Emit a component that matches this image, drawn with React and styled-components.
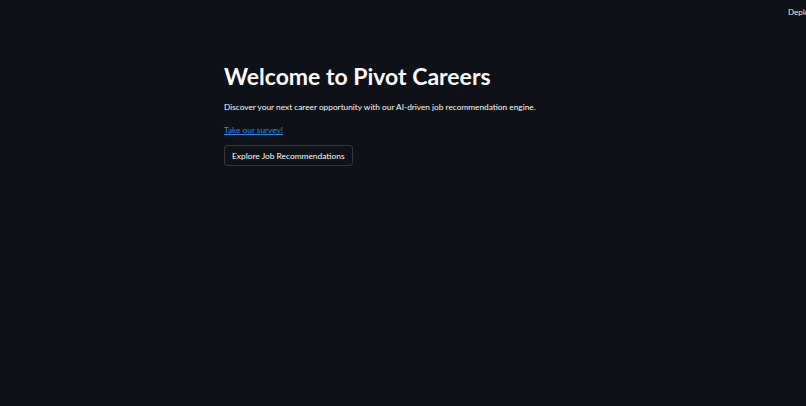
import styled, { createGlobalStyle } from "styled-components";

const Global = createGlobalStyle`
  html, body {
    margin: 0;
    padding: 0;
    background: #0e1117;
    height: 100%;
  }
  #root {
    min-height: 100vh;
  }
  * { box-sizing: border-box; }
`;

const Page = styled.div`
  min-height: 100vh;
  background: #0e1117;
  color: #fafafa;
  font-family: Lato, "Noto Sans", sans-serif;
  overflow: hidden;
`;

const Header = styled.header`
  height: 24px;
  display: flex;
  justify-content: flex-end;
  align-items: center;
  margin-right: -18px;
`;

const DeployText = styled.span`
  font-size: 8px;
  color: #e6e6e6;
  width: 36px;
  white-space: nowrap;
`;

const Main = styled.main`
  width: 358px;
  margin: 0 auto;
  padding-top: 36px;
  display: flex;
  flex-direction: column;
  align-items: flex-start;
`;

const Title = styled.h1`
  margin: 0;
  font-size: 23px;
  font-weight: 700;
  line-height: 32px;
  color: #fafafa;
`;

const Lead = styled.p`
  margin: 8px 0 0;
  font-size: 8.3px;
  line-height: 14px;
  color: #fafafa;
`;

const Link = styled.a`
  margin-top: 9px;
  font-size: 8.3px;
  line-height: 14px;
  color: #2b8ae8;
  text-decoration: underline;
`;

const Button = styled.button`
  margin-top: 8px;
  height: 21px;
  padding: 0 7px;
  background: #0e1117;
  border: 1px solid rgba(250, 250, 250, 0.16);
  border-radius: 4px;
  color: #fafafa;
  font-family: inherit;
  font-size: 8.4px;
  cursor: pointer;
`;

export default function App() {
  return (
    <Page>
      <Global />
      <Header>
        <DeployText>Deploy</DeployText>
      </Header>
      <Main>
        <Title>Welcome to Pivot Careers</Title>
        <Lead>
          Discover your next career opportunity with our AI-driven job recommendation engine.
        </Lead>
        <Link href="#">Take our survey!</Link>
        <Button>Explore Job Recommendations</Button>
      </Main>
    </Page>
  );
}
